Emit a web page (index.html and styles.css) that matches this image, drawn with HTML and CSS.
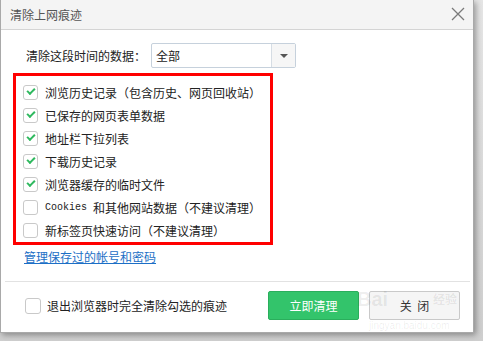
FILE: index.html
```html
<!DOCTYPE html>
<html lang="zh-CN">
<head>
  <meta charset="UTF-8" />
  <meta name="viewport" content="width=device-width, initial-scale=1.0" />
  <title>清除上网痕迹</title>
  <link rel="stylesheet" href="styles.css">
</head>
<body>
  <div class="dialog">
    <!-- Title bar -->
    <div class="titlebar">
      <span class="title">清除上网痕迹</span>
      <svg class="close-x" width="14" height="14" viewBox="0 0 14 14">
        <path d="M1 1 L13 13 M13 1 L1 13" stroke="#7a7a7a" stroke-width="1.3" fill="none" />
      </svg>
    </div>

    <div class="content">
      <div class="range-row">
        <span class="range-label">清除这段时间的数据：</span>
        <div class="select">
          <span class="select-value">全部</span>
          <span class="select-arrow"><i class="tri"></i></span>
        </div>
      </div>

      <div class="options">
        <label class="opt"><span class="box checked"></span>浏览历史记录（包含历史、网页回收站）</label>
        <label class="opt"><span class="box checked"></span>已保存的网页表单数据</label>
        <label class="opt"><span class="box checked"></span>地址栏下拉列表</label>
        <label class="opt"><span class="box checked"></span>下载历史记录</label>
        <label class="opt"><span class="box checked"></span>浏览器缓存的临时文件</label>
        <label class="opt"><span class="box"></span><span class="latin">Cookies </span>和其他网站数据（不建议清理）</label>
        <label class="opt"><span class="box"></span>新标签页快速访问（不建议清理）</label>
      </div>

      <a class="manage-link" href="#">管理保存过的帐号和密码</a>
    </div>

    <div class="footer">
      <label class="exit-opt"><span class="box big"></span>退出浏览器时完全清除勾选的痕迹</label>
      <div class="buttons">
        <button class="btn btn-primary">立即清理</button>
        <button class="btn btn-plain">关 闭</button>
      </div>
    </div>

    <!-- faint site watermark -->
    <span class="wm wm-bai">Bai</span>
    <span class="wm wm-cn">经验</span>
    <span class="wm wm-url">jingyan.baidu.com</span>
  </div>
</body>
</html>
```

FILE: styles.css
```css
body {
  margin: 0;
  background: linear-gradient(to bottom, #e6e6e6, #cfcfcf);
  font-family: "Noto Sans CJK SC", "Noto Sans", sans-serif;
  font-size: 12px;
  color: #222;
  width: 483px;
  height: 341px;
  overflow: hidden;
}

.dialog {
  position: relative;
  width: 472px;
  height: 332px;
  background: #fff;
  border: 1px solid #a9a9a9;
  border-top: none;
  box-shadow: 2px 2px 6px rgba(0, 0, 0, 0.35);
  display: flex;
  flex-direction: column;
}

.titlebar {
  height: 29px;
  background: #f4f4f4;
  border-bottom: 1px solid #d4d4d4;
  display: flex;
  align-items: center;
  justify-content: space-between;
  padding: 0 8px 0 9px;
}

.title {
  color: #555;
  font-size: 12px;
  line-height: 29px;
}

.close-x {
  display: block;
  margin-top: -2px;
}

.content {
  padding: 0 0 0 12px;
}

.range-row {
  margin-top: 13px;
  height: 25px;
  display: flex;
  align-items: center;
}

.range-label {
  margin-left: 13px;
  width: 125px;
}

.select {
  width: 143px;
  height: 23px;
  border: 1px solid #c6d1dc;
  border-radius: 2px;
  display: flex;
  background: #fff;
}

.select-value {
  flex: 1;
  padding-left: 4px;
  line-height: 23px;
}

.select-arrow {
  width: 23px;
  background: #f6f6f6;
  border-left: 1px solid #d6dde4;
  display: flex;
  align-items: center;
  justify-content: center;
}

.tri {
  width: 0;
  height: 0;
  border-left: 4px solid transparent;
  border-right: 4px solid transparent;
  border-top: 4px solid #555;
}

.options {
  margin-top: 5px;
  width: 247px;
  border: 3px solid #f00;
  padding: 5px 0 0 7px;
  height: 161px;
}

.opt {
  display: flex;
  align-items: center;
  height: 23px;
  white-space: nowrap;
}

.box {
  flex: none;
  width: 13px;
  height: 13px;
  border: 1px solid #c9c9c9;
  border-radius: 3px;
  margin-right: 7px;
  background: #fff;
  position: relative;
}

.box.checked::after {
  content: "";
  position: absolute;
  left: 3px;
  top: 2px;
  width: 6px;
  height: 3px;
  border-left: 2px solid #2fb95f;
  border-bottom: 2px solid #2fb95f;
  transform: rotate(-45deg);
}

.box.big {
  width: 14px;
  height: 14px;
  margin-right: 6px;
}

.latin {
  font-family: "Liberation Mono", monospace;
  font-size: 10px;
  white-space: pre;
}

.manage-link {
  display: inline-block;
  margin-left: 11px;
  line-height: 24px;
  color: #1c6fc6;
  text-decoration: underline;
}

.footer {
  margin: 12px 3px 0 4px;
  border-top: 1px solid #e2e2e2;
  padding: 9px 10px 0 20px;
  display: flex;
  justify-content: space-between;
  align-items: center;
}

.exit-opt {
  display: flex;
  align-items: center;
  color: #222;
}

.buttons {
  display: flex;
  gap: 10px;
}

.btn {
  width: 91px;
  height: 29px;
  font-family: inherit;
  font-size: 12px;
  border-radius: 2px;
  padding: 0;
  cursor: pointer;
}

.btn-primary {
  background: #33c46b;
  border: 1px solid #2aae5c;
  color: #fff;
}

.btn-plain {
  background: #f5f5f5;
  border: 1px solid #c9c9c9;
  color: #333;
  word-spacing: 3px;
}

.wm {
  position: absolute;
  pointer-events: none;
  color: rgba(0, 0, 0, 0.08);
  white-space: nowrap;
}

.wm-bai {
  left: 356px;
  top: 287px;
  font-family: "Liberation Sans", sans-serif;
  font-size: 20px;
  font-weight: bold;
  line-height: 24px;
}

.wm-cn {
  left: 432px;
  top: 289px;
  font-size: 12px;
  font-weight: bold;
  line-height: 20px;
}

.wm-url {
  left: 368px;
  top: 320px;
  font-family: "Liberation Sans", sans-serif;
  font-size: 10px;
  line-height: 11px;
}
```
